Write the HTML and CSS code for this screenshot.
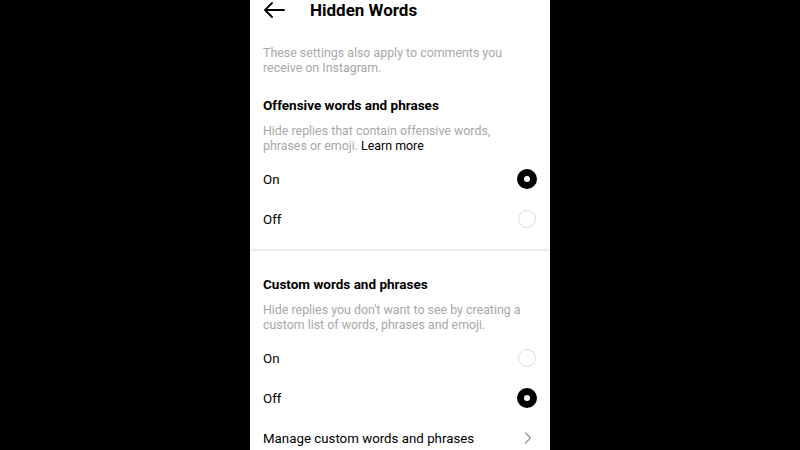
FILE: index.html
```html
<!DOCTYPE html>
<html lang="en">
<head>
    <meta charset="UTF-8">
    <meta name="viewport" content="width=device-width, initial-scale=1.0">
    <title>Hidden Words</title>
    <link rel="stylesheet" href="styles.css">
</head>
<body>
    <div class="screen">
        <div class="header">
            <svg class="back" width="22" height="16" viewBox="0 0 22 16">
                <path d="M21 8H2M9 1L2 8l7 7" fill="none" stroke="#000" stroke-width="1.8" stroke-linecap="round" stroke-linejoin="round"/>
            </svg>
            <h1>Hidden Words</h1>
        </div>

        <p class="note">These settings also apply to comments you receive on Instagram.</p>

        <div class="section">
            <h2>Offensive words and phrases</h2>
            <p class="desc">Hide replies that contain offensive words, phrases or emoji. <span class="link">Learn more</span></p>
            <div class="row">On <span class="radio checked"></span></div>
            <div class="row">Off <span class="radio"></span></div>
        </div>

        <div class="divider"></div>

        <div class="section custom">
            <h2>Custom words and phrases</h2>
            <p class="desc">Hide replies you don't want to see by creating a custom list of words, phrases and emoji.</p>
            <div class="row">On <span class="radio"></span></div>
            <div class="row">Off <span class="radio checked"></span></div>
            <div class="row">Manage custom words and phrases
                <svg class="chevron" width="8" height="12" viewBox="0 0 8 12">
                    <path d="M1.5 1l5 5-5 5" fill="none" stroke="#9a9a9a" stroke-width="1.4" stroke-linecap="round" stroke-linejoin="round"/>
                </svg>
            </div>
        </div>
    </div>
</body>
</html>
```

FILE: styles.css
```css
body {
    margin: 0;
    background: #000;
    font-family: Roboto, "Liberation Sans", sans-serif;
    display: flex;
    justify-content: center;
}
.screen {
    width: 300px;
    height: 450px;
    background: #fff;
    overflow: hidden;
    color: #000;
}
.header {
    height: 20px;
    display: flex;
    align-items: center;
    padding-left: 13px;
}
.back {
    margin-right: 25px;
}
h1 {
    margin: 0;
    font-size: 17px;
    line-height: 20px;
    font-weight: 700;
}
.note, .desc {
    margin: 0;
    padding: 0 13px;
    font-size: 12.4px;
    line-height: 15px;
    color: #a8a8a8;
}
.note {
    margin-top: 25px;
}
.section {
    padding-top: 22px;
}
.section.custom {
    padding-top: 25px;
}
h2 {
    margin: 0 0 10px;
    padding: 0 13px;
    font-size: 13.5px;
    line-height: 16px;
    font-weight: 700;
}
.desc {
    margin-bottom: 6px;
}
.link {
    color: #000;
}
.row {
    height: 40px;
    display: flex;
    align-items: center;
    justify-content: space-between;
    padding: 0 14px 0 13px;
    font-size: 13.3px;
}
.radio {
    width: 18px;
    height: 18px;
    border: 1px solid #dbdbdb;
    border-radius: 50%;
    box-sizing: border-box;
}
.radio.checked {
    width: 20px;
    height: 20px;
    margin-right: -1px;
    border: 7px solid #000;
    background: #fff;
}
.chevron {
    margin-right: 4px;
}
.divider {
    height: 2px;
    background: #efefef;
    margin-top: 10px;
}
```
